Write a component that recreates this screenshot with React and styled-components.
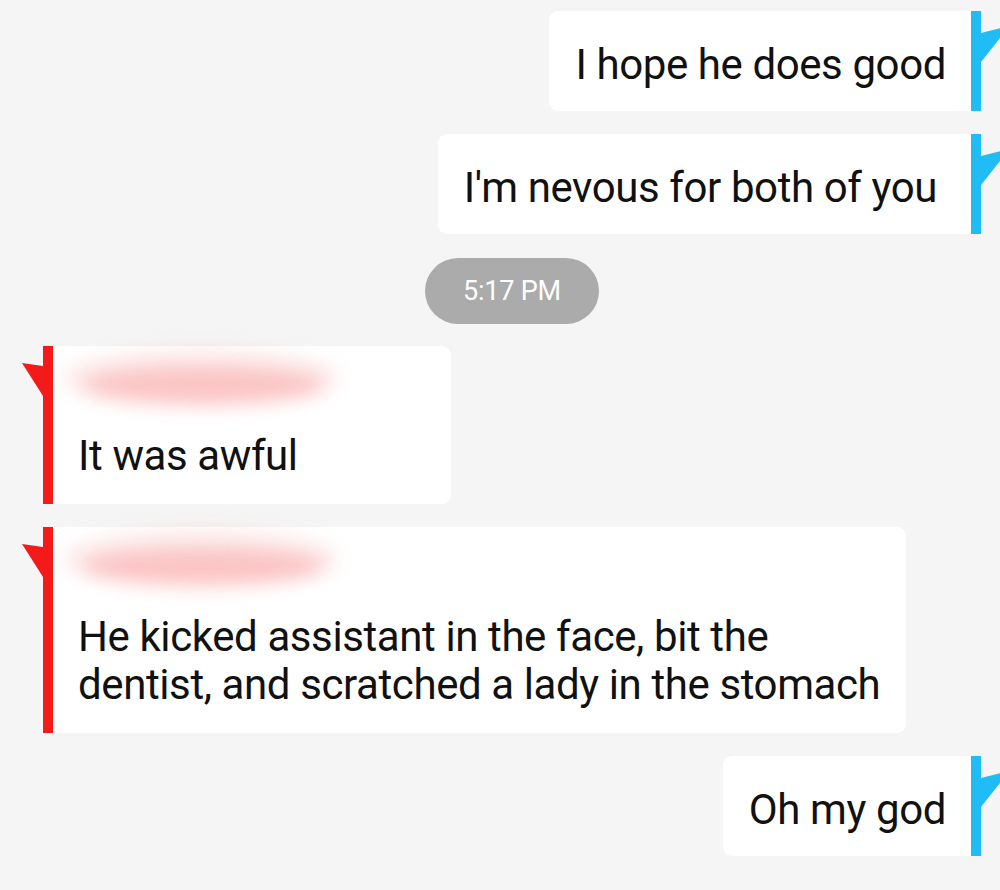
import React from "react";
import styled, { createGlobalStyle } from "styled-components";

const Global = createGlobalStyle`
  html, body { margin: 0; padding: 0; background: #f5f5f5; }
  body { font-family: Roboto, "Noto Sans", sans-serif; }
`;

const Page = styled.div`
  width: 1000px;
  height: 890px;
  overflow: hidden;
  background: #f5f5f5;
  display: flex;
  flex-direction: column;
  gap: 23px;
  padding-top: 11px;
  box-sizing: border-box;
`;

const SentRow = styled.div`
  display: flex;
  justify-content: flex-end;
  padding-right: 19px;
`;

const ReceivedRow = styled.div`
  display: flex;
  justify-content: flex-start;
  padding-left: 43px;
`;

const Bubble = styled.div`
  background: #ffffff;
  border-radius: ${(p) => (p.$side === "sent" ? "9px 0 0 9px" : "0 9px 9px 0")};
  padding: ${(p) =>
    p.$side === "sent" ? `30px ${p.$pr || 25}px 22px 26px` : "0 25px 24px 25px"};
  font-size: 42px;
  letter-spacing: -0.4px;
  line-height: 48px;
  color: #111;
  width: ${(p) => (p.$w ? `${p.$w}px` : "auto")};
  box-sizing: border-box;
`;

const Tail = styled.div`
  position: relative;
  width: 10px;
  flex: none;
  background: ${(p) => p.$color};
  &::after {
    content: "";
    position: absolute;
    background: ${(p) => p.$color};
    ${(p) =>
      p.$side === "sent"
        ? `left: 10px; top: 17px; width: 20px; height: 34px;
           clip-path: polygon(0 15%, 100% 0, 100% 26%, 0 100%);`
        : `right: 10px; top: 17px; width: 21px; height: 33px;
           clip-path: polygon(0 0, 100% 9%, 100% 100%, 0 0);`}
  }
`;

const NameArea = styled.div`
  height: 86px;
  margin: 0 -25px 0 -25px;
  position: relative;
`;

const Blur = styled.div`
  position: absolute;
  left: ${(p) => p.$left}px;
  top: ${(p) => p.$top}px;
  width: ${(p) => p.$w}px;
  height: ${(p) => p.$h}px;
  border-radius: 50%;
  background: rgba(248, 150, 150, ${(p) => p.$a});
  filter: blur(${(p) => p.$b}px);
`;

const TimeRow = styled.div`
  display: flex;
  justify-content: center;
  padding-left: 24px;
  margin-top: 1px;
  margin-bottom: -1px;
`;

const TimePill = styled.div`
  background: #ababab;
  color: #ffffff;
  font-size: 27px;
  letter-spacing: -0.2px;
  height: 66px;
  line-height: 66px;
  padding: 0 38px;
  border-radius: 33px;
`;

function Sent({ children, pr }) {
  return (
    <SentRow>
      <Bubble $side="sent" $pr={pr}>{children}</Bubble>
      <Tail $color="#1fbcf6" $side="sent" />
    </SentRow>
  );
}

function Received({ children, w }) {
  return (
    <ReceivedRow>
      <Tail $color="#f41a1a" $side="received" />
      <Bubble $side="received" $w={w}>
        <NameArea>
          <Blur $left={10} $top={4} $w={275} $h={56} $a={0.22} $b={10} />
          <Blur $left={30} $top={22} $w={240} $h={34} $a={0.45} $b={9} />
        </NameArea>
        {children}
      </Bubble>
    </ReceivedRow>
  );
}

export default function App() {
  return (
    <>
      <Global />
      <Page>
        <Sent>I hope he does good</Sent>
        <Sent pr={34}>I'm nevous for both of you</Sent>
        <TimeRow>
          <TimePill>5:17 PM</TimePill>
        </TimeRow>
        <Received w={398}>It was awful</Received>
        <Received w={853}>
          He kicked assistant in the face, bit the dentist, and scratched a lady in the stomach
        </Received>
        <Sent>Oh my god</Sent>
      </Page>
    </>
  );
}
